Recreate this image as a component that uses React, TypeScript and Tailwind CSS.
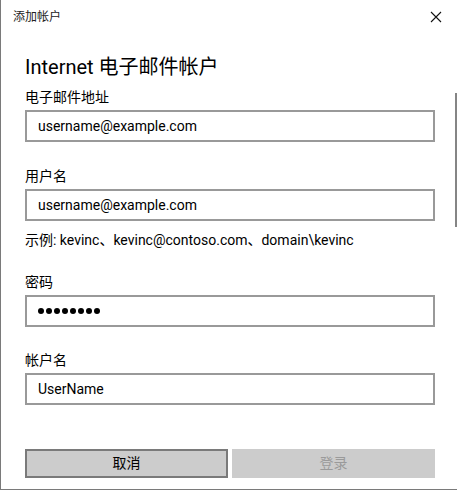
import React from 'react'

const font = { fontFamily: 'Roboto, "Noto Sans CJK SC", sans-serif' }

function Field({ label, value, dots }: { label: string; value?: string; dots?: number }) {
  return (
    <div>
      <div className="h-[20px] leading-[20px] text-[14px] text-black">{label}</div>
      <div className="mt-[3px] h-[32px] w-[410px] border-2 border-[#999999] bg-white flex items-center pl-[11px] text-[14px] text-black">
        {dots ? (
          <div className="flex gap-[2px]">
            {Array.from({ length: dots }).map((_, i) => (
              <span key={i} className="w-[6px] h-[6px] rounded-full bg-black" />
            ))}
          </div>
        ) : (
          value
        )}
      </div>
    </div>
  )
}

export default function App() {
  return (
    <div className="w-[457px] h-[490px] bg-white border-l border-b border-[#7a7a7a] flex flex-col relative" style={font}>
      <div className="h-[34px] flex items-center justify-between pl-[12px] pr-[14px]">
        <span className="text-[12px] text-[#222]">添加帐户</span>
        <svg width="12" height="12" viewBox="0 0 12 12" className="mr-[1px]">
          <path d="M1 1L11 11M11 1L1 11" stroke="#111" strokeWidth="1.1" />
        </svg>
      </div>
      <div className="pl-[24px] flex flex-col">
        <h1 className="mt-[20px] h-[26px] leading-[26px] text-[20px] text-black">Internet 电子邮件帐户</h1>
        <div className="mt-[7px]">
          <Field label="电子邮件地址" value="username@example.com" />
        </div>
        <div className="mt-[24px]">
          <Field label="用户名" value="username@example.com" />
        </div>
        <div className="mt-[9px] h-[20px] leading-[20px] text-[14px] text-black">
          示例: kevinc、kevinc@contoso.com、domain\kevinc
        </div>
        <div className="mt-[22px]">
          <Field label="密码" dots={8} />
        </div>
        <div className="mt-[23px]">
          <Field label="帐户名" value="UserName" />
        </div>
        <div className="mt-[44px] flex gap-[4px] w-[410px]">
          <button className="h-[29px] w-[203px] border-2 border-[#7a7a7a] bg-[#cccccc] text-[14px] text-black">取消</button>
          <button className="h-[29px] w-[203px] bg-[#cccccc] text-[14px] text-[#9a9a9a]">登录</button>
        </div>
      </div>
      <div className="absolute right-0 top-[93px] w-[2px] h-[134px] bg-[#858585]" />
    </div>
  )
}
